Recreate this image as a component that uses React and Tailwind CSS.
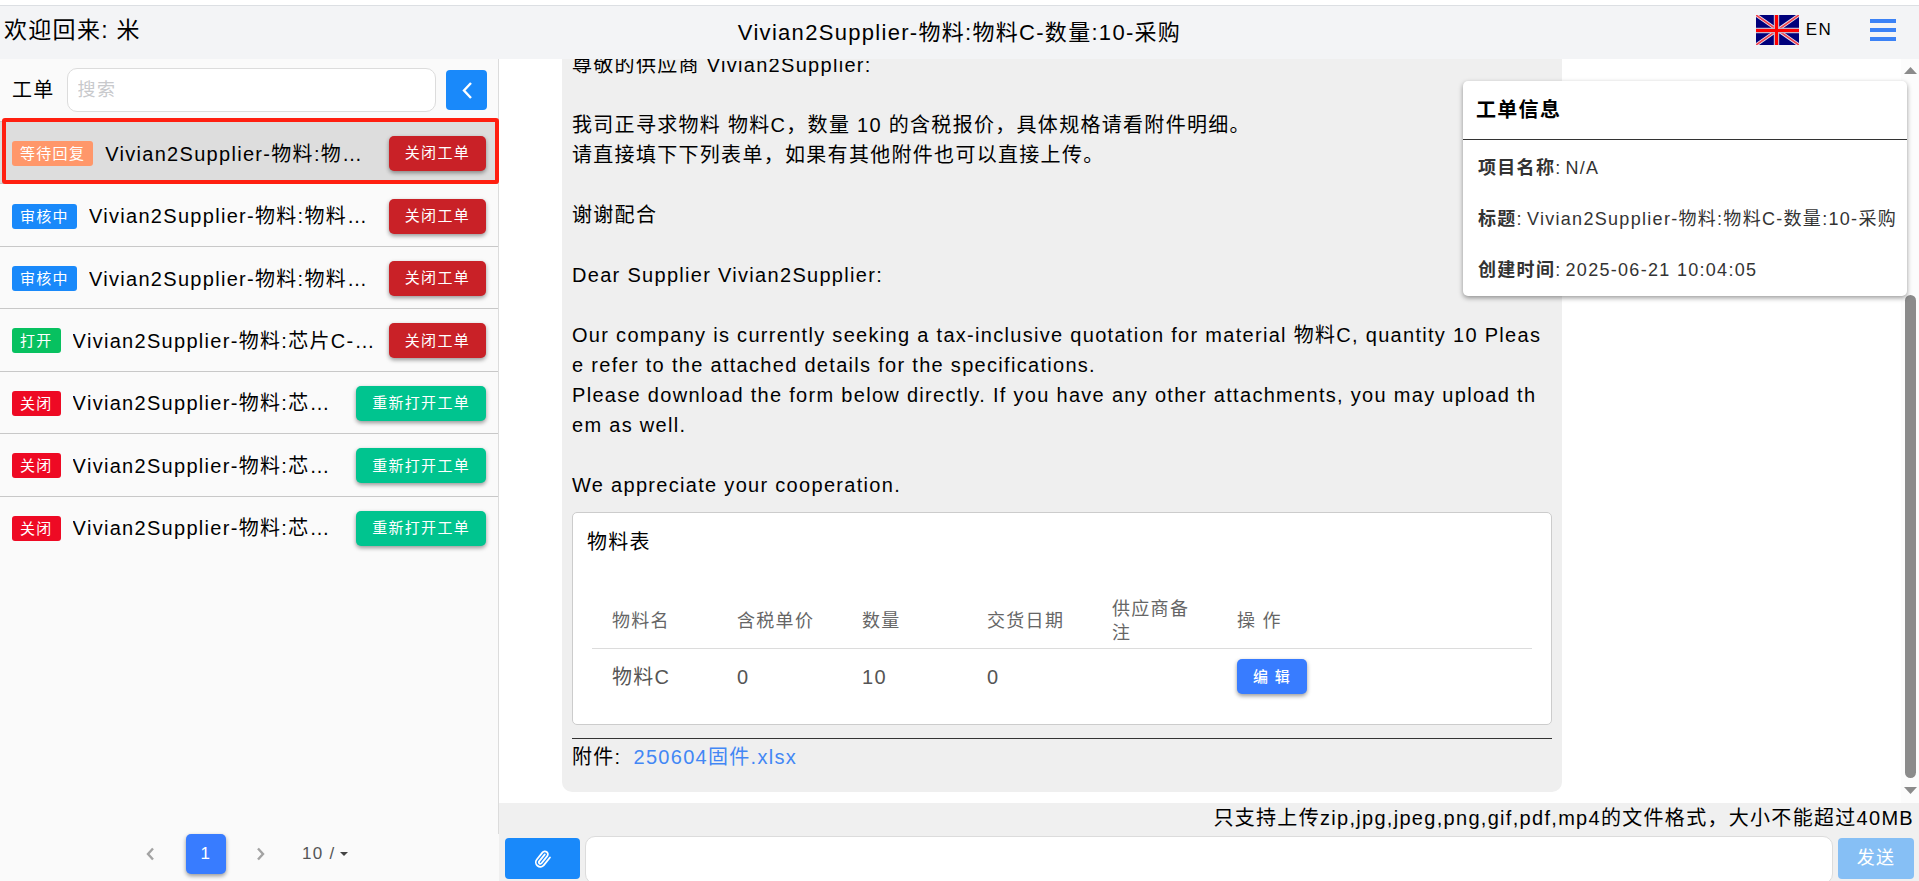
import { useState } from 'react';
import clsx from 'clsx';

const STATUS = {
    waiting: { label: '等待回复', color: 'bg-[#ff976a]' },
    reviewing: { label: '审核中', color: 'bg-[#1989fa]' },
    open: { label: '打开', color: 'bg-[#07c160]' },
    closed: { label: '关闭', color: 'bg-[#ee0a24]' },
};

const TICKETS = [
    { id: 1, status: 'waiting', title: 'Vivian2Supplier-物料:物料C-数量:10-采购' },
    { id: 2, status: 'reviewing', title: 'Vivian2Supplier-物料:物料C-数量:10-采购' },
    { id: 3, status: 'reviewing', title: 'Vivian2Supplier-物料:物料C-数量:10-采购' },
    { id: 4, status: 'open', title: 'Vivian2Supplier-物料:芯片C-数量:10-采购' },
    { id: 5, status: 'closed', title: 'Vivian2Supplier-物料:芯片C-数量:10-采购' },
    { id: 6, status: 'closed', title: 'Vivian2Supplier-物料:芯片C-数量:10-采购' },
    { id: 7, status: 'closed', title: 'Vivian2Supplier-物料:芯片C-数量:10-采购' },
];

const MESSAGE = `尊敬的供应商 Vivian2Supplier:

我司正寻求物料 物料C，数量 10 的含税报价，具体规格请看附件明细。
请直接填下下列表单，如果有其他附件也可以直接上传。

谢谢配合

Dear Supplier Vivian2Supplier:

Our company is currently seeking a tax-inclusive quotation for material 物料C, quantity 10 Please refer to the attached details for the specifications.
Please download the form below directly. If you have any other attachments, you may upload them as well.

We appreciate your cooperation.`;

const COLUMNS = ['物料名', '含税单价', '数量', '交货日期', '供应商备注', '操 作'];

const MATERIALS = [{ name: '物料C', price: '0', quantity: '10', date: '0', remark: '' }];

const TICKET_INFO = [
    { label: '项目名称', value: 'N/A' },
    { label: '标题', value: 'Vivian2Supplier-物料:物料C-数量:10-采购' },
    { label: '创建时间', value: '2025-06-21 10:04:05' },
];

const RAISED = 'rounded-[5px] shadow-[0_2px_4px_rgba(0,0,0,0.4)]';

function FlagUK() {
    return (
        <svg viewBox="0 0 43 30" className="h-[30px] w-[43px]" aria-hidden="true">
            <rect width="43" height="30" fill="#00007b" />
            <path d="M0 0L43 30M43 0L0 30" stroke="#e8e0ee" strokeWidth="3.4" />
            <path d="M0 0L43 30M43 0L0 30" stroke="#f0404c" strokeWidth="1.6" />
            <path d="M20.5 0V30M0 15.5H43" stroke="#cbb0c4" strokeWidth="5.4" />
            <path d="M20.5 0V30M0 15.5H43" stroke="#f00" strokeWidth="3" />
        </svg>
    );
}

function Header() {
    return (
        <header className="mt-[5px] grid h-[54px] shrink-0 grid-cols-[1fr_auto_1fr] items-center border-t border-[#dcdfe3] bg-[#f3f4f6]">
            <p className="pb-[6px] pl-1 text-[23px] leading-7">欢迎回来: 米</p>
            <h1 className="text-[22px] leading-7">Vivian2Supplier-物料:物料C-数量:10-采购</h1>
            <div className="flex items-center justify-end pb-[6px]">
                <button type="button" className="flex items-center gap-[7px] text-[17px]">
                    <FlagUK />
                    EN
                </button>
                <button type="button" aria-label="菜单" className="mr-[23px] ml-[38px]">
                    <svg viewBox="0 0 26 22" className="h-[22px] w-[26px]" fill="#3b82f6">
                        <rect y="0" width="26" height="4" />
                        <rect y="9" width="26" height="4" />
                        <rect y="18" width="26" height="4" />
                    </svg>
                </button>
            </div>
        </header>
    );
}

function TicketRow({ ticket, isActive, onSelect }) {
    const status = STATUS[ticket.status];
    const isClosed = ticket.status === 'closed';

    return (
        <li
            onClick={onSelect}
            className={clsx(
                'relative flex items-center gap-3 border-t border-[#c8c8c8] px-3 pt-[2px]',
                isActive && 'bg-[#ddd]'
            )}
        >
            <span className={clsx('shrink-0 rounded-[3px] px-2 text-[15px] leading-[25px] text-white', status.color)}>
                {status.label}
            </span>
            <span className="min-w-0 flex-1 truncate text-[20px] leading-[30px]">{ticket.title}</span>
            <button
                type="button"
                className={clsx(
                    'h-[35px] shrink-0 px-4 text-[15px] text-white',
                    RAISED,
                    isClosed ? 'bg-[#00c48f]' : 'bg-[#c92127]'
                )}
            >
                {isClosed ? '重新打开工单' : '关闭工单'}
            </button>
            {isActive && (
                <span className="pointer-events-none absolute -top-1 -right-px -bottom-px left-[2px] z-10 rounded-[3px] border-4 border-[#ff1f10]" />
            )}
        </li>
    );
}

function Pagination() {
    return (
        <nav className="flex items-center pb-[7px] pl-[145px] text-[17px] text-[#555]" aria-label="分页">
            <button type="button" aria-label="上一页" className="w-[10px]">
                <svg viewBox="0 0 10 14" className="h-[14px] w-[10px]" fill="none" stroke="#a3a3a3" strokeWidth="2.4">
                    <path d="M8 1.5L3 7L8 12.5" />
                </svg>
            </button>
            <button type="button" className={clsx('mr-[30px] ml-[31px] size-10 bg-[#387cff] text-white', RAISED)}>
                1
            </button>
            <button type="button" aria-label="下一页" className="w-[10px]">
                <svg viewBox="0 0 10 14" className="h-[14px] w-[10px]" fill="none" stroke="#a3a3a3" strokeWidth="2.4">
                    <path d="M2 1.5L7 7L2 12.5" />
                </svg>
            </button>
            <button type="button" className="ml-9 flex items-center gap-1">
                10 /
                <svg viewBox="0 0 8 4" className="h-1 w-2" fill="#444">
                    <path d="M0 0H8L4 4Z" />
                </svg>
            </button>
        </nav>
    );
}

function Sidebar() {
    const [activeId, setActiveId] = useState(1);

    return (
        <aside className="flex w-[499px] shrink-0 flex-col bg-[#fafafa]">
            <div className="flex min-h-0 flex-1 flex-col border-r border-[#dcdcdc]">
                <div className="flex items-center py-[9px] pr-[11px] pl-3">
                    <label htmlFor="search" className="text-[20px] leading-[30px]">工单</label>
                    <input
                        id="search"
                        type="text"
                        placeholder="搜索"
                        className="mr-[10px] ml-3 h-11 min-w-0 flex-1 rounded-[10px] border border-[#dcdcdc] bg-white px-[10px] text-[18px] placeholder:text-[#c8c9cc]"
                    />
                    <button type="button" aria-label="收起" className="flex h-10 w-[41px] items-center justify-center rounded-[4px] bg-[#1989fa]">
                        <svg viewBox="0 0 10 17" className="h-[17px] w-[10px]" fill="none" stroke="#fff" strokeWidth="2.4">
                            <path d="M9 1L2 8.5L9 16" />
                        </svg>
                    </button>
                </div>
                <ul className="grid h-[437px] shrink-0 auto-rows-fr grid-cols-1">
                    {TICKETS.map((ticket) => (
                        <TicketRow
                            key={ticket.id}
                            ticket={ticket}
                            isActive={ticket.id === activeId}
                            onSelect={() => setActiveId(ticket.id)}
                        />
                    ))}
                </ul>
            </div>
            <Pagination />
        </aside>
    );
}

function MaterialTable() {
    return (
        <section className="mt-3 rounded-[5px] border border-[#ccc] bg-white px-[14px] pt-[14px] pb-[19px]">
            <h2 className="text-[20px] leading-[30px]">物料表</h2>
            <table className="mt-[38px] ml-[5px] w-[940px] max-w-full table-fixed text-left text-[#666]">
                <thead>
                    <tr className="h-[53px] border-b border-[#dcdcdc]">
                        {COLUMNS.map((column) => (
                            <th key={column} className="w-[125px] px-5 text-[18px] leading-6 font-normal">
                                {column}
                            </th>
                        ))}
                        <th />
                    </tr>
                </thead>
                <tbody>
                    {MATERIALS.map((row) => (
                        <tr key={row.name} className="h-[57px] text-[20px] text-[#555]">
                            <td className="px-5">{row.name}</td>
                            <td className="px-5">{row.price}</td>
                            <td className="px-5">{row.quantity}</td>
                            <td className="px-5">{row.date}</td>
                            <td className="px-5">{row.remark}</td>
                            <td className="pl-5">
                                <button type="button" className={clsx('block h-[35px] bg-[#387cff] px-4 text-[15px] font-medium text-white', RAISED)}>
                                    编 辑
                                </button>
                            </td>
                            <td />
                        </tr>
                    ))}
                </tbody>
            </table>
        </section>
    );
}

function TicketInfo() {
    return (
        <section className="absolute top-[22px] right-3 w-[444px] rounded-[5px] bg-white shadow-[0_2px_5px_rgba(0,0,0,0.4)]">
            <h2 className="border-b border-[#333] px-[13px] py-[14px] text-[20px] leading-[30px] font-bold">工单信息</h2>
            <dl className="px-[15px] pt-[3px] text-[18px] text-[#333]">
                {TICKET_INFO.map((item) => (
                    <div key={item.label} className="flex h-[51px] items-center gap-1 whitespace-nowrap">
                        <dt>
                            <b>{item.label}</b>:
                        </dt>
                        <dd>{item.value}</dd>
                    </div>
                ))}
            </dl>
        </section>
    );
}

function ScrollTrack() {
    return (
        <div className="flex w-[18px] shrink-0 flex-col items-center bg-[#fcfcfc] pt-2 pb-[9px]" aria-hidden="true">
            <svg viewBox="0 0 13 7" className="h-[7px] w-[13px]" fill="#8b8b8b">
                <path d="M0 7L6.5 0L13 7Z" />
            </svg>
            <div className="mt-[221px] mb-[9px] w-[11px] flex-1 rounded-full bg-[#8b8b8b]" />
            <svg viewBox="0 0 13 7" className="h-[7px] w-[13px]" fill="#8b8b8b">
                <path d="M0 0L6.5 7L13 0Z" />
            </svg>
        </div>
    );
}

function Conversation() {
    return (
        <div className="relative flex min-h-0 flex-1">
            <div className="flex min-w-0 flex-1 flex-col justify-end overflow-hidden pb-[11px]">
                <article className="mr-4 ml-[63px] max-w-[1000px] rounded-[10px] bg-[#efefef] px-[10px] pb-[20px]">
                    <p className="pr-2 text-[20px] leading-[30px] break-all whitespace-pre-line">{MESSAGE}</p>
                    <MaterialTable />
                    <hr className="mt-[13px] border-[#333]" />
                    <p className="pt-[3px] text-[20px] leading-[30px]">
                        附件:
                        <a href="#attachment" className="ml-3 text-[#4287f5]">250604固件.xlsx</a>
                    </p>
                </article>
            </div>
            <ScrollTrack />
            <TicketInfo />
        </div>
    );
}

function Composer() {
    return (
        <footer className="h-[78px] shrink-0 overflow-hidden bg-[#f0f0f0] pr-[5px] pl-[6px]">
            <p className="pb-[2px] text-right text-[20px] leading-[31px]">
                只支持上传zip,jpg,jpeg,png,gif,pdf,mp4的文件格式，大小不能超过40MB
            </p>
            <form className="flex items-start gap-[5px]" onSubmit={(e) => e.preventDefault()}>
                <button type="button" aria-label="上传附件" className="mt-[2px] flex h-[41px] w-[75px] items-center justify-center rounded-[4px] bg-[#1989fa]">
                    <svg viewBox="0 0 24 24" className="size-[18px]" fill="none" stroke="#fff" strokeWidth="2.4" strokeLinecap="round">
                        <path
                            transform="rotate(-6 12 12)"
                            d="M21.44 11.05l-9.19 9.19a6 6 0 0 1-8.49-8.49l8.57-8.57A4 4 0 1 1 18 8.84l-8.59 8.57a2 2 0 0 1-2.83-2.83l8.49-8.48"
                        />
                    </svg>
                </button>
                <input
                    type="text"
                    aria-label="消息"
                    className="h-[48px] min-w-0 flex-1 rounded-[10px] border border-[#dcdcdc] bg-white px-[10px] text-[20px]"
                />
                <button type="submit" disabled className="mt-[2px] h-[41px] w-[76px] rounded-[4px] bg-[#86bff5] text-[18px] text-white">
                    发送
                </button>
            </form>
        </footer>
    );
}

export default function App() {
    return (
        <div className="flex h-screen flex-col overflow-hidden bg-white font-['Liberation_Sans','Noto_Sans_CJK_SC',sans-serif] text-[20px] tracking-[0.065em] text-black">
            <Header />
            <div className="flex min-h-0 flex-1">
                <Sidebar />
                <main className="flex min-w-0 flex-1 flex-col">
                    <Conversation />
                    <Composer />
                </main>
            </div>
        </div>
    );
}
